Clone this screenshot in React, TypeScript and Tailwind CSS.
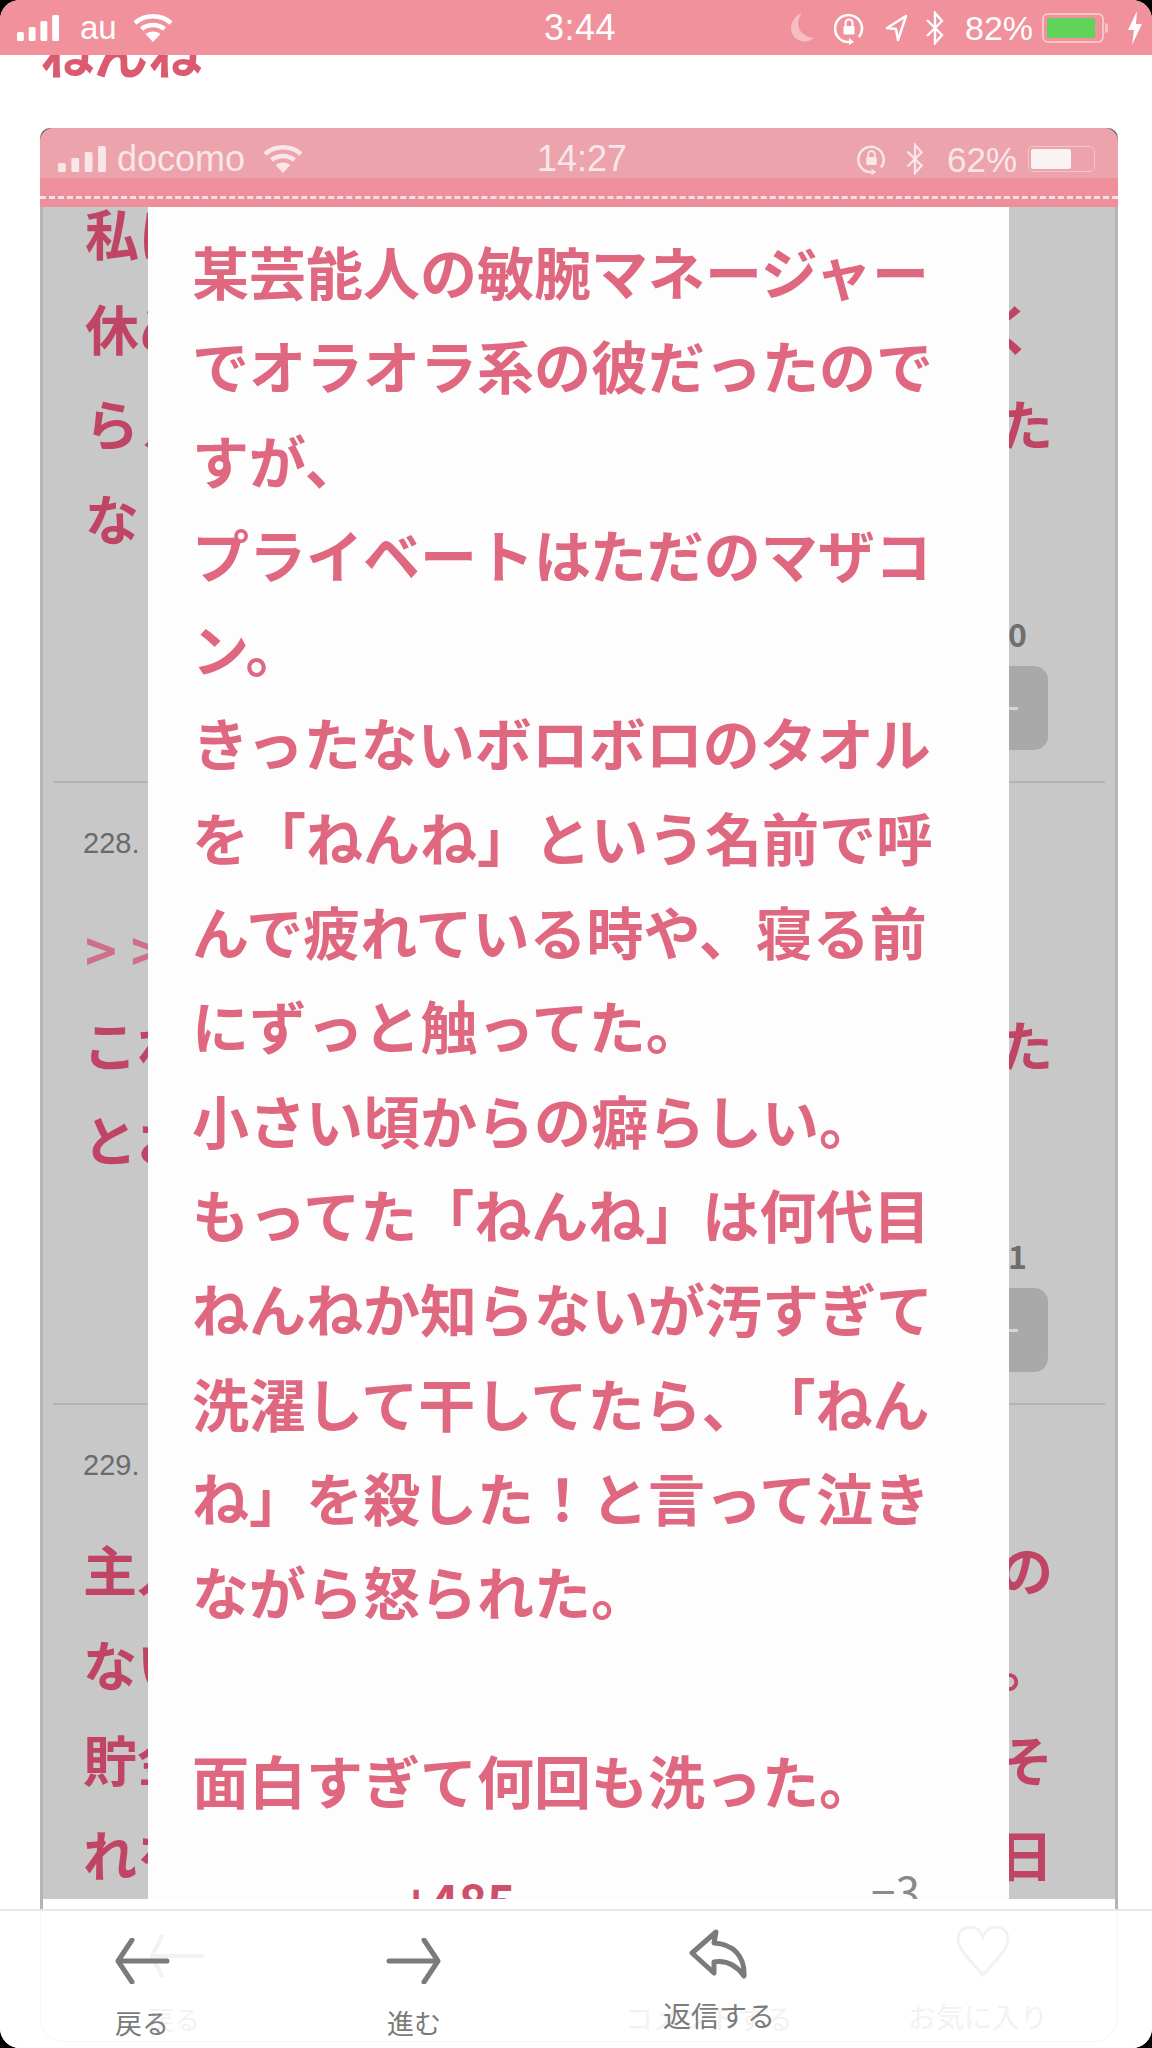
import React from "react";

const jp = '"Noto Sans CJK JP", "Noto Sans", sans-serif';
const ui = '"Liberation Sans", "Noto Sans CJK JP", sans-serif';

const modalLines = [
  "某芸能人の敏腕マネージャー",
  "でオラオラ系の彼だったので",
  "すが、",
  "プライベートはただのマザコ",
  "ン。",
  "きったないボロボロのタオル",
  "を「ねんね」という名前で呼",
  "んで疲れている時や、寝る前",
  "にずっと触ってた。",
  "小さい頃からの癖らしい。",
  "もってた「ねんね」は何代目",
  "ねんねか知らないが汚すぎて",
  "洗濯して干してたら、「ねん",
  "ね」を殺した！と言って泣き",
  "ながら怒られた。",
  "\u00a0",
  "面白すぎて何回も洗った。",
];

function Signal({ className }: { className?: string }) {
  return (
    <svg className={className} viewBox="0 0 44 26" preserveAspectRatio="none" fill="currentColor">
      <rect x="0" y="17" width="7" height="9" rx="1.5" />
      <rect x="12" y="12" width="7" height="14" rx="1.5" />
      <rect x="24" y="6" width="7" height="20" rx="1.5" />
      <rect x="36" y="0" width="7" height="26" rx="1.5" />
    </svg>
  );
}

function Wifi({ className }: { className?: string }) {
  return (
    <svg className={className} viewBox="0 0 40 28" fill="none" stroke="currentColor" strokeWidth="4.5">
      <path d="M2 9 C12 0 28 0 38 9" />
      <path d="M8.5 15 C15 9.5 25 9.5 31.5 15" />
      <path d="M20 28 L12.5 20 C16.5 16.5 23.5 16.5 27.5 20 Z" fill="currentColor" stroke="none" />
    </svg>
  );
}

function RotationLock({ className }: { className?: string }) {
  return (
    <svg className={className} viewBox="0 0 30 34" fill="none" stroke="currentColor" strokeWidth="2.6">
      <path d="M25 26 A13.5 13.5 0 1 0 15 31" />
      <path d="M15 27 L20 31 L15 34 Z" fill="currentColor" stroke="none" />
      <rect x="9.5" y="15" width="11" height="8.5" rx="1.2" fill="currentColor" stroke="none" />
      <path d="M11.5 15 V12 a3.5 3.5 0 0 1 7 0 V15" strokeWidth="2" />
    </svg>
  );
}

function Bluetooth({ className }: { className?: string }) {
  return (
    <svg className={className} viewBox="0 0 20 34" fill="none" stroke="currentColor" strokeWidth="2.4">
      <path d="M2 9 L17 24 L10 32 V2 L17 10 L2 25" />
    </svg>
  );
}

function Line({ left, right, leftClass = "", rightClass = "" }: { left: string; right?: string; leftClass?: string; rightClass?: string }) {
  return (
    <div className="flex h-[95px] items-center justify-between text-[54px] font-semibold text-[#c04565]">
      <span className={leftClass}>{left}</span>
      <span className={rightClass}>{right}</span>
    </div>
  );
}

function Votes({ digit }: { digit: string }) {
  return (
    <div className="flex flex-col items-end pr-[57px]">
      <div className="mr-[21px] h-[40px] text-[32px] font-bold leading-[40px] text-[#6e6e6e]">{digit}</div>
      <div className="mt-[13px] flex h-[84px] w-[120px] items-center justify-center rounded-[14px] bg-[#a9a9a9] pl-[44px]">
        <div className="h-[3px] w-[16px] bg-[#d5d5d5]" />
      </div>
    </div>
  );
}

function Number({ children }: { children: string }) {
  return (
    <div className="h-[28px] text-[29px] leading-[28px] text-[#6b6b6b]" style={{ fontFamily: ui }}>{children}</div>
  );
}

function GrayPage() {
  return (
    <div className="h-full overflow-hidden border-x-[3px] border-[#b5b5b5] bg-[#c8c8c8] px-[10px]" style={{ fontFamily: jp }}>
      <div className="mt-[-22px] pl-[32px] pr-[52px]">
        <Line left="私は" />
        <Line left="休め" right="く" rightClass="mr-[18px]" />
        <Line left="らえ" right="た" />
        <Line left="なし" />
      </div>
      <div className="mt-[48px]">
        <Votes digit="0" />
      </div>
      <div className="mt-[31px] h-[2px] bg-[#b4b4b4]" />
      <div className="pl-[30px] pr-[52px] pt-[46px]">
        <Number>228.</Number>
        <div className="mt-[44px]">
          <Line left="&gt;&gt;" leftClass="ml-[2px] tracking-[14px] text-[#cf6f88]" />
          <Line left="これ" right="た" />
          <Line left="とお" />
        </div>
      </div>
      <div className="mt-[49px]">
        <Votes digit="1" />
      </div>
      <div className="mt-[31px] h-[2px] bg-[#b4b4b4]" />
      <div className="pl-[30px] pr-[52px] pt-[46px]">
        <Number>229.</Number>
        <div className="mt-[42px]">
          <Line left="主人" right="の" />
          <Line left="ない" right="。" />
          <Line left="貯金" right="そ" />
          <Line left="れを" right="日" />
        </div>
      </div>
    </div>
  );
}

function Toolbar() {
  const strong = "#7b7b7b";
  const ghost = "#f2f2f2";
  return (
    <div className="absolute bottom-0 left-0 right-0 top-[1909px] border-t-2 border-[#e6e6e6] bg-white">
      {/* faint toolbar of the embedded screenshot */}
      <div className="absolute bottom-[6px] left-[40px] right-[34px] top-0 rounded-b-[24px] border border-t-0 border-[#f6f6f6]" />
      <div className="absolute left-[148px] top-[22px]">
        <svg width="56" height="46" viewBox="0 0 56 46" fill="none" stroke={ghost} strokeWidth="4" strokeLinecap="round">
          <path d="M54 23 H4 M14 3 L4 23 L14 43" />
        </svg>
        <div className="mt-[26px] text-[26px] leading-[28px] text-[#f2f2f2]" style={{ fontFamily: jp }}>戻る</div>
      </div>
      <div className="absolute left-[625px] top-[92px] whitespace-nowrap text-[28px] leading-[30px] text-[#f2f2f2]" style={{ fontFamily: jp }}>コメントする</div>
      <div className="absolute left-[908px] top-[90px] whitespace-nowrap text-[28px] leading-[30px] text-[#f2f2f2]" style={{ fontFamily: jp }}>お気に入り</div>
      <svg className="absolute left-[955px] top-[14px]" width="56" height="52" viewBox="0 0 56 52" fill="none" stroke={ghost} strokeWidth="3">
        <path d="M28 50 C14 34 3 24 3 14 C3 6 9 2 15 2 C21 2 26 6 28 12 C30 6 35 2 41 2 C47 2 53 6 53 14 C53 24 42 34 28 50 Z" />
      </svg>

      <div className="absolute left-[114px] top-[27px] flex w-[56px] flex-col items-center">
        <svg width="58" height="46" viewBox="0 0 58 46" fill="none" stroke={strong} strokeWidth="5" strokeLinecap="round" strokeLinejoin="round">
          <path d="M54 23 H5 M19 2 L5 23 L19 44" />
        </svg>
        <div className="mt-[25px] whitespace-nowrap text-[27px] leading-[28px] text-[#7b7b7b]" style={{ fontFamily: jp }}>戻る</div>
      </div>
      <div className="absolute left-[386px] top-[27px] flex w-[56px] flex-col items-center">
        <svg width="58" height="46" viewBox="0 0 58 46" fill="none" stroke={strong} strokeWidth="5" strokeLinecap="round" strokeLinejoin="round">
          <path d="M4 23 H53 M39 2 L53 23 L39 44" />
        </svg>
        <div className="mt-[25px] whitespace-nowrap text-[27px] leading-[28px] text-[#7b7b7b]" style={{ fontFamily: jp }}>進む</div>
      </div>
      <div className="absolute left-[663px] top-[18px] flex w-[112px] flex-col items-center">
        <svg width="60" height="50" viewBox="0 0 60 50" fill="none" stroke={strong} strokeWidth="5" strokeLinejoin="round" strokeLinecap="round">
          <path d="M27 3 L3 24 L25 44 L25 33 C38 31 47 36 55 47 C56 27 44 15 25 14 Z" />
        </svg>
        <div className="mt-[21px] whitespace-nowrap text-[28px] leading-[30px] text-[#7b7b7b]" style={{ fontFamily: jp }}>返信する</div>
      </div>
    </div>
  );
}

export default function App() {
  return (
    <div className="relative h-[2048px] w-[1152px] overflow-hidden bg-black">
      <div className="relative h-[2048px] w-full overflow-hidden rounded-[20px] bg-white">
        {/* outer status bar */}
        <div className="relative z-10 flex h-[55px] items-center bg-[#f0919c] pl-[17px] text-white" style={{ fontFamily: ui }}>
          <Signal className="h-[26px] w-[43px]" />
          <span className="ml-[20px] w-[36px] text-[33px] leading-none">au</span>
          <Wifi className="ml-[17px] h-[28px] w-[40px]" />
          <span className="ml-[371px] w-[76px] whitespace-nowrap text-[36px] leading-none tracking-[0.5px]">3:44</span>
          <svg className="ml-[170px] h-[32px] w-[25px] text-[#f7bcc4]" viewBox="0 0 25 32" fill="currentColor">
            <path d="M12 1 C5 10 7 24 24 26 C16 33 2 29 1 17 C1 9 6 3 12 1 Z" />
          </svg>
          <RotationLock className="ml-[19px] h-[34px] w-[30px]" />
          <svg className="ml-[20px] h-[30px] w-[24px]" viewBox="0 0 24 30" fill="none" stroke="currentColor" strokeWidth="2.4" strokeLinejoin="round">
            <path d="M22 3 L3 15 L12 16 L14 27 Z" />
          </svg>
          <Bluetooth className="ml-[17px] h-[34px] w-[20px]" />
          <span className="ml-[20px] w-[67px] whitespace-nowrap text-[34px] leading-none">82%</span>
          <div className="ml-[10px] flex h-[30px] w-[62px] items-center rounded-[6px] border-2 border-[#f7c4ca] p-[3px]">
            <div className="h-full w-[48px] rounded-[2px] bg-[#5fd35a]" />
          </div>
          <div className="ml-[1px] h-[10px] w-[3px] rounded-r bg-[#f7c4ca]" />
          <svg className="ml-[19px] h-[34px] w-[16px]" viewBox="0 0 16 34" fill="currentColor">
            <path d="M10 0 L1 19 H7 L5 34 L15 13 H9 Z" />
          </svg>
        </div>

        {/* clipped page title */}
        <div className="ml-[40px] mt-[-31px] h-[56px] text-[54px] font-bold leading-[56px] text-[#dc5a70]" style={{ fontFamily: jp }}>ねんね</div>

        {/* embedded screenshot */}
        <div className="relative ml-[40px] mr-[34px] mt-[48px] h-[1781px] overflow-hidden rounded-t-[10px] bg-[#666666]">
          <div className="relative h-[79px] overflow-hidden rounded-t-[14px] bg-[#ee8f9c]">
            <div className="flex h-[50px] items-center bg-[#eca3ab] pl-[18px] pt-[12px] text-[#f8e6e8]" style={{ fontFamily: ui }}>
              <Signal className="h-[26px] w-[49px]" />
              <span className="ml-[10px] w-[130px] whitespace-nowrap text-[36px] leading-none">docomo</span>
              <Wifi className="ml-[16px] h-[28px] w-[40px]" />
              <span className="ml-[234px] w-[93px] whitespace-nowrap text-[36px] leading-none">14:27</span>
              <RotationLock className="ml-[225px] h-[32px] w-[33px]" />
              <Bluetooth className="ml-[17px] h-[32px] w-[20px]" />
              <span className="ml-[22px] w-[70px] whitespace-nowrap text-[35px] leading-none">62%</span>
              <div className="ml-[11px] flex h-[26px] w-[67px] items-center rounded-[5px] border border-[#f3c6cb] p-[2px]">
                <div className="h-full w-[40px] rounded-[2px] bg-[#faf3f3]" />
              </div>
            </div>
            <div className="mt-[18px] border-t-[3px] border-dashed border-[#f8dfe1]" />
          </div>

          <div className="relative h-[1692px] overflow-hidden">
            <GrayPage />
            <div className="absolute bottom-0 left-[108px] top-0 w-[861px] bg-[#fdfdfd] pl-[44px] pt-[16px]" style={{ fontFamily: jp }}>
              {modalLines.map((l, i) => (
                <div key={i} className="h-[94.3px] whitespace-nowrap text-[57px] font-semibold leading-[94.3px] text-[#df6880] [text-spacing-trim:space-all]">{l}</div>
              ))}
              <div className="relative">
                <span className="absolute left-[210px] top-[49px] text-[48px] font-bold leading-none text-[#cf4f6b]">+485</span>
                <span className="absolute left-[679px] top-[42px] text-[44px] leading-none text-[#8a8a8a]">−3</span>
              </div>
            </div>
          </div>
          <div className="h-[10px] border-x-[3px] border-[#b5b5b5] bg-white" />
        </div>

        <Toolbar />
      </div>
    </div>
  );
}
